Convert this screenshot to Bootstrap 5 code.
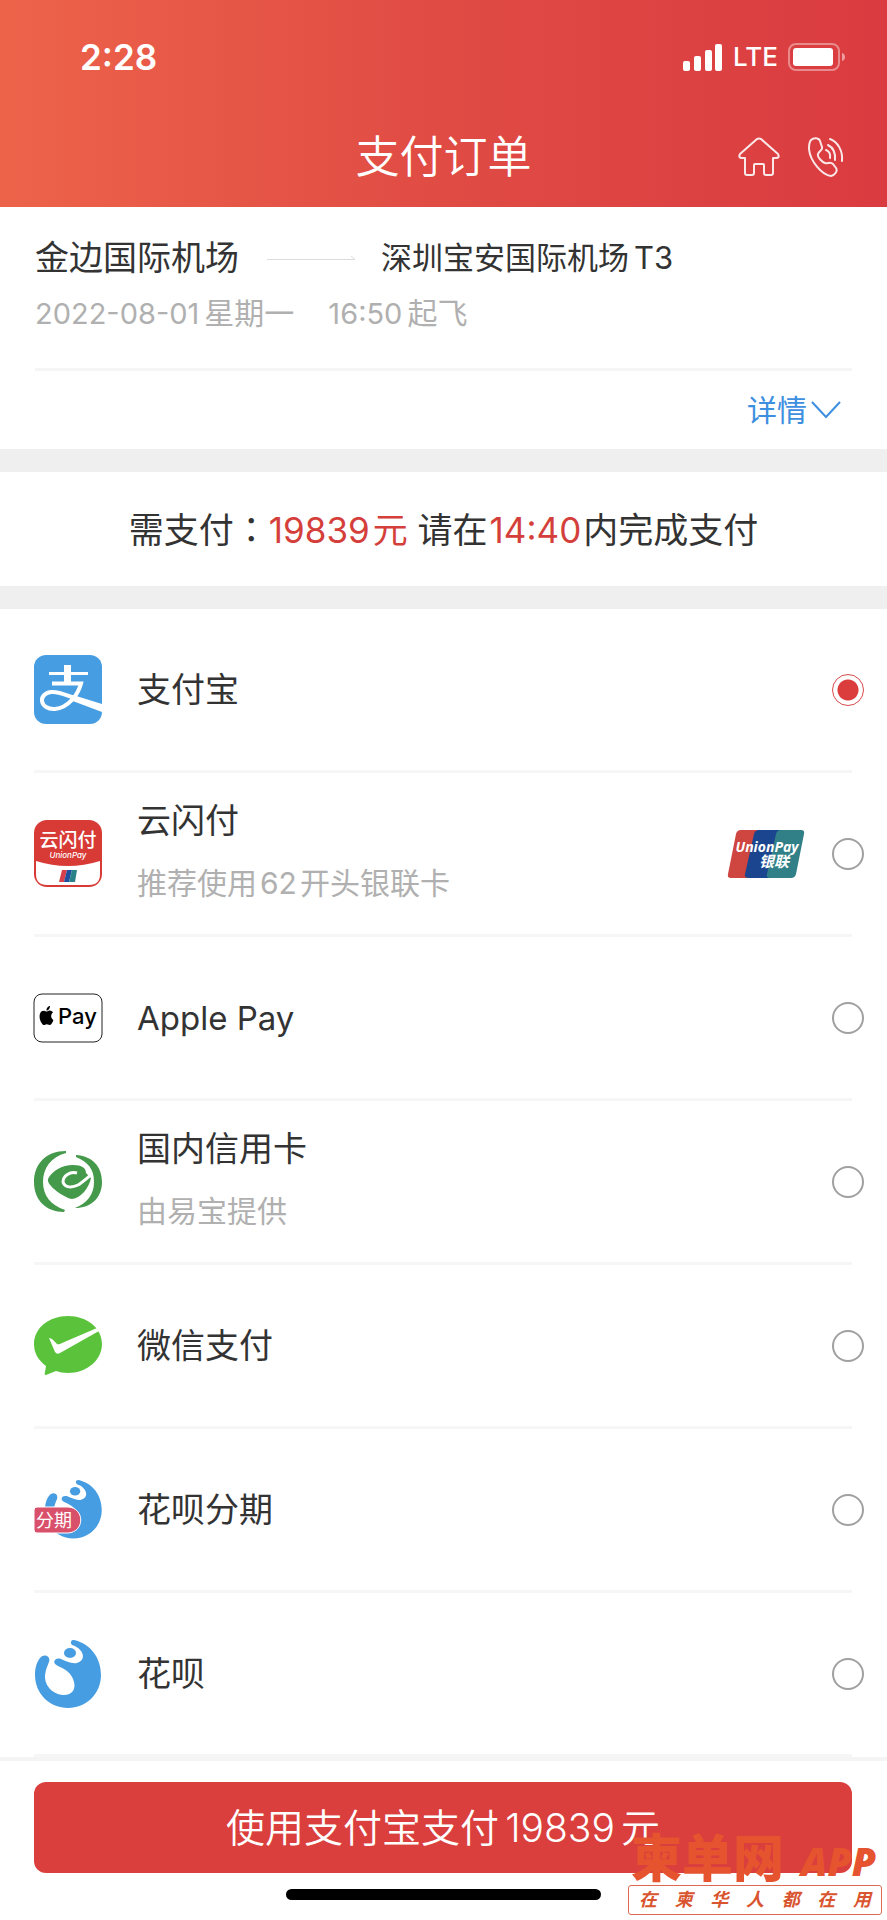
<!DOCTYPE html>
<html lang="zh-CN">
<head>
<meta charset="utf-8">
<meta name="viewport" content="width=device-width, initial-scale=1">
<title>支付订单</title>
<link href="https://cdn.jsdelivr.net/npm/bootstrap@5.3.0/dist/css/bootstrap.min.css" rel="stylesheet">
<style>
  body { font-family: Inter, "Noto Sans CJK SC", sans-serif; color: #333; background: #fff; }
  svg { display: block; flex: none; }
  .top-bar { background: linear-gradient(90deg, #ed634a 0%, #e04b44 50%, #da3b40 100%); color: #fff; }
  .status { padding: 33px 42px 0 80px; height: 84px; }
  .clock { font-size: 35px; line-height: 48px; font-weight: 600; }
  .lte { font-size: 26px; line-height: 48px; font-weight: 500; margin: 0 10px; }
  .title-row { display: grid; grid-template-columns: 1fr auto 1fr; align-items: center; height: 123px; padding: 22px 43px 0; }
  .title-row h1 { font-size: 44px; line-height: 60px; font-weight: 350; margin: 0; }
  .title-row a { color: #fff; }
  .trip { padding: 27px 35px 0 35px; }
  .from { font-size: 34px; line-height: 48px; }
  .route { margin: 0 24px 0 26px; }
  .to { font-size: 31px; line-height: 48px; }
  .num { margin: 0 3px; }
  .num-end { margin-left: 5px; }
  .num-start { margin-right: 5px; }
  .when { font-size: 30px; line-height: 40px; height: 40px; color: #b0b0b0; margin-top: 11px; }
  .when .num-start { font-size: 29px; }
  .takeoff { margin-left: 34px; }
  .more { border-top: 3px solid #f5f5f5; margin-top: 35px; height: 81px; }
  .more button { font-size: 30px; line-height: 40px; color: #3d8fe0; border: 0; background: none; padding: 0 11px 0 0; }
  .band { height: 23px; background: #efefef; }
  .due { font-size: 35px; line-height: 48px; height: 114px; padding-top: 32px; }
  .due .num-start { margin-right: 3px; }
  .due .num { margin: 0 2px; }
  .colon { font-family: "Noto Sans CJK TC", sans-serif; }
  .red { color: #d43f3b; }
  .methods { margin: 0 35px 0 34px; }
  .method { height: 164px; border-bottom: 3px solid #f6f6f6; cursor: pointer; }
  .logo-slot { width: 68px; margin-right: 35px; }
  .logo-slot svg { margin: 0 auto; overflow: visible; }
  .name { font-size: 34px; line-height: 48px; }
  .name-latin { font-size: 33px; }
  .two-line { padding-bottom: 6px; }
  .hint { font-size: 30px; line-height: 44px; margin-top: 16px; color: #b0b0b0; }
  .pick { appearance: none; width: 32px; height: 32px; margin: 0 -12px 0 27px; flex: none; border: 2px solid #a0a0a0; border-radius: 50%; background: #fff; }
  .pick:checked { border: 1px solid #d94a4a; background: radial-gradient(circle, #db3c3c 10px, #fff 11px); }
  .pay-bar { border-top: 4px solid #f4f4f4; padding: 21px 35px 18px 34px; }
  .pay-btn { height: 91px; border: 0; border-radius: 12px; background: #da3e3d; color: #fff; font-size: 39px; line-height: 56px; font-weight: 350; }
  .digits { margin: 0 6px; }
  .grabber { width: 315px; height: 11px; border-radius: 6px; background: #000; margin-top: 16px; }
  .stamp { position: absolute; right: 5px; bottom: 3px; width: 254px; color: #e5532f; pointer-events: none; }
  .stamp-top { font-size: 51px; line-height: 52px; font-weight: 900; white-space: nowrap; padding: 0 6px 0 3px; }
  .stamp-app { font-size: 39px; line-height: 48px; font-weight: 800; font-style: italic; font-family: "Open Sans", sans-serif; }
  .stamp-line { border: 1px solid #dd6a50; border-radius: 3px; background: #fff; font-size: 18px; line-height: 28px; font-weight: 700; font-style: italic; padding: 0 10px; color: #d9552f; }
</style>
</head>
<body>
<div class="position-relative">
  <header class="top-bar">
    <div class="status d-flex justify-content-between align-items-start">
      <div class="clock">2:28</div>
      <div class="d-flex align-items-center">
        <svg width="40" height="27" viewBox="0 0 40 27" fill="#fff"><rect y="17" width="7" height="10" rx="2"/><rect x="11" y="12" width="7" height="15" rx="2"/><rect x="22" y="6" width="7" height="21" rx="2"/><rect x="32" width="7" height="27" rx="2"/></svg>
        <span class="lte">LTE</span>
        <svg width="57" height="28" viewBox="0 0 57 28"><rect x="1" y="1" width="50" height="26" rx="7" fill="none" stroke="#fff" stroke-opacity=".4" stroke-width="2"/><rect x="5" y="5" width="40" height="18" rx="3" fill="#fff"/><path d="M54 10c4 1 4 7 0 8z" fill="#fff" fill-opacity=".5"/></svg>
      </div>
    </div>
    <div class="title-row">
      <span></span>
      <h1>支付订单</h1>
      <nav class="d-flex justify-content-end align-items-center" aria-label="快捷">
        <a href="#" aria-label="首页"><svg width="42" height="40" viewBox="0 0 42 40" fill="none" stroke="#fff" stroke-opacity=".88" stroke-width="2" stroke-linejoin="round"><path d="M19 2Q21 1 23 2L40 17Q42 21 38 21H35V36Q35 38 33 38H28Q26 38 26 36V28Q26 27 25 27H17Q16 27 16 28V36Q16 38 14 38H9Q7 38 7 36V21H4Q0 21 2 17Z"/></svg></a>
        <a href="#" class="ms-4 ps-1" aria-label="电话"><svg width="36" height="40" viewBox="0 0 36 40" fill="none" stroke="#fff" stroke-opacity=".88" stroke-width="2" stroke-linecap="round" stroke-linejoin="round"><path d="M3 3C6 0 11 1 12 4L14 10C15 13 11 14 10 17C9 20 14 25 17 26C20 27 22 24 25 27L28 31C30 34 27 38 23 39C14 38 2 24 1 12C1 8 1 5 3 3Z"/><path d="M18 13Q23 15 22 21M20 8Q28 12 27 23M22 2C30 5 35 14 34 24"/></svg></a>
      </nav>
    </div>
  </header>

  <main>
    <section class="trip">
      <div class="d-flex align-items-center">
        <span class="from">金边国际机场</span>
        <svg class="route" width="92" height="8" viewBox="0 0 92 8" fill="none" stroke="#dcdcdc" stroke-width="1"><path d="M2 5.500H90L86 2"/></svg>
        <span class="to">深圳宝安国际机场<span class="num-end">T3</span></span>
      </div>
      <div class="when"><span class="num-start">2022-08-01</span>星期一<span class="num-start takeoff">16:50</span>起飞</div>
      <div class="more d-flex justify-content-end align-items-center">
        <button type="button" class="d-flex align-items-center">详情<svg class="ms-1" width="30" height="18" viewBox="0 0 30 18" fill="none" stroke="#3d8fe0" stroke-width="2"><path d="M1 1L15 16L29 1"/></svg></button>
      </div>
    </section>
    <div class="band"></div>
    <p class="due text-center m-0">需支付<span class="colon" lang="zh-TW">：</span><span class="red"><span class="num-start">19839</span>元</span> 请在<span class="num red">14:40</span>内完成支付</p>
    <div class="band"></div>

    <form id="pay" class="methods">
      <label class="method d-flex align-items-center">
        <span class="logo-slot"><svg width="68" height="69" viewBox="0 0 68 69"><rect width="68" height="69" rx="12" fill="#479de1"/><g fill="none" stroke="#fff"><path d="M33.500 10V28" stroke-width="7"/><path d="M15 18.500H54" stroke-width="3"/><path d="M18 28.500H47C44 40 34 53 21 54C6 55 3 39 17 37C25 36 34 41 44 44" stroke-width="4"/></g><path d="M39 40L68 49V57L36 45Z" fill="#fff"/></svg></span>
        <span class="name flex-grow-1">支付宝</span>
        <input class="pick" type="radio" name="method" checked>
      </label>
      <label class="method d-flex align-items-center">
        <span class="logo-slot"><svg width="68" height="67" viewBox="0 0 68 67"><rect width="68" height="67" rx="13" fill="#d83a36"/><path d="M2 41Q34 51 66 41V54Q66 65 55 65H13Q2 65 2 54Z" fill="#fff"/><text x="34" y="27" text-anchor="middle" font-size="19" font-weight="500" fill="#fff">云闪付</text><text x="34" y="38" text-anchor="middle" font-size="8" font-style="italic" font-weight="500" fill="#fff">UnionPay</text><path d="M28 50H33L30 62H25Z" fill="#d8414b"/><path d="M33 50H38L35 62H30Z" fill="#1f4f9d"/><path d="M38 50H43L41 62H35Z" fill="#2a8289"/></svg></span>
        <span class="two-line flex-grow-1"><span class="name d-block">云闪付</span><span class="hint d-block">推荐使用<span class="num">62</span>开头银联卡</span></span>
        <svg width="78" height="48" viewBox="0 0 78 48"><path d="M14 0H32L24 48H4Q0 48 1 44L9 4Q10 0 14 0Z" fill="#cf453f"/><path d="M32 0H54L46 48H22Q17 48 18 44L27 4Q28 0 32 0Z" fill="#1c4590"/><path d="M54 0H74Q78 0 77 4L69 44Q68 48 64 48H43Q39 48 40 44L49 4Q50 0 54 0Z" fill="#318087"/><text x="40" y="22" text-anchor="middle" font-family="Open Sans, sans-serif" font-size="14" font-weight="700" font-style="italic" fill="#fff">UnionPay</text><text x="47" y="37" text-anchor="middle" font-size="15" font-weight="700" font-style="italic" fill="#fff">银联</text></svg>
        <input class="pick" type="radio" name="method">
      </label>
      <label class="method d-flex align-items-center">
        <span class="logo-slot"><svg width="68" height="49" viewBox="1 0 68 49"><rect x="1" y="1" width="68" height="48" rx="8" fill="#fff" stroke="#222" stroke-width="1"/><svg x="5" y="13" width="17" height="19" viewBox="0 0 16 16" preserveAspectRatio="none"><path d="M11.182.008C11.148-.03 9.923.023 8.857 1.180c-1.066 1.156-.902 2.482-.878 2.516s1.520.087 2.475-1.258.762-2.391.728-2.430m3.314 11.733c-.048-.096-2.325-1.234-2.113-3.422s1.675-2.789 1.698-2.854-.597-.790-1.254-1.157a3.700 3.700 0 0 0-1.563-.434c-.108-.003-.483-.095-1.254.116-.508.139-1.653.589-1.968.607-.316.018-1.256-.522-2.267-.665-.647-.125-1.333.131-1.824.328-.490.196-1.422.754-2.074 2.237-.652 1.482-.311 3.830-.067 4.560s.625 1.924 1.273 2.796c.576.984 1.340 1.667 1.659 1.899s1.219.386 1.843.067c.502-.308 1.408-.485 1.766-.472.357.013 1.061.154 1.782.539.571.197 1.111.115 1.652-.105.541-.221 1.324-1.059 2.238-2.758q.520-1.185.473-1.282"/></svg><text x="25" y="31" font-size="22" font-weight="500">Pay</text></svg></span>
        <span class="name name-latin flex-grow-1">Apple Pay</span>
        <input class="pick" type="radio" name="method">
      </label>
      <label class="method d-flex align-items-center">
        <span class="logo-slot"><svg width="68" height="62" viewBox="0 0 68 62" fill="#45994a"><path d="M32 0C12 0 0 13 0 31S12 61 30 61L31 59C17 54 9 45 9 31S17 6 32 2Z"/><path d="M42 4C58 5 68 15 68 31S57 57 41 57C53 52 60 44 60 31S54 11 42 6Z"/><path d="M14 28C18 20 28 14 39 14C48 14 52 17 52 22L57 27C55 37 47 47 38 48C33 48 12 35 14 28Z"/><path d="M43 22C36 20 29 25 29 31C31 37 38 37 44 34C49 31 52 28 58 23" fill="none" stroke="#fff" stroke-width="3"/></svg></span>
        <span class="two-line flex-grow-1"><span class="name d-block">国内信用卡</span><span class="hint d-block">由易宝提供</span></span>
        <input class="pick" type="radio" name="method">
      </label>
      <label class="method d-flex align-items-center">
        <span class="logo-slot"><svg width="68" height="59" viewBox="0 0 68 59"><path d="M34 0C53 0 68 12 68 28S53 57 34 57Q27 57 22 55L12 59Q10 59 11 56L12 50C4 44 0 37 0 28C0 12 15 0 34 0Z" fill="#5ac33b"/><path d="M15 22Q17 21 23 28Q25 29 28 27L63 12L65 15L26 37Q23 39 21 36Z" fill="#fff"/></svg></span>
        <span class="name flex-grow-1">微信支付</span>
        <input class="pick" type="radio" name="method">
      </label>
      <label class="method d-flex align-items-center">
        <span class="logo-slot"><svg width="68" height="59" viewBox="0 0 68 59"><g transform="translate(11 0) scale(.86)" fill="#479de1"><path id="swirl" d="M39 0C56 4 66 18 66 35C66 54 51 68 33 68S0 54 0 35C0 27 2 22 5 18C9 13 16 16 14 22C12 27 10 31 10 38C11 49 21 55 29 55C37 55 41 49 39 42C37 33 30 29 23 26C16 23 20 17 26 19C31 21 36 24 42 23C49 21 49 15 46 11C43 7 40 6 37 5C35 2 36 0 39 0Z"/><ellipse cx="35" cy="13" rx="6" ry="5"/></g><path d="M3 27H34C51 28 51 52 34 53H3Q0 53 0 50V30Q0 27 3 27Z" fill="#d9506b" stroke="#fff" stroke-width="1"/><text x="2" y="47" font-size="18" font-weight="400" fill="#fff">分期</text></svg></span>
        <span class="name flex-grow-1">花呗分期</span>
        <input class="pick" type="radio" name="method">
      </label>
      <label class="method d-flex align-items-center">
        <span class="logo-slot"><svg width="66" height="68" viewBox="0 0 66 68" fill="#479de1"><use href="#swirl"/><ellipse cx="35" cy="13" rx="6" ry="5"/></svg></span>
        <span class="name flex-grow-1">花呗</span>
        <input class="pick" type="radio" name="method">
      </label>
    </form>
  </main>

  <footer class="pay-bar">
    <button type="submit" form="pay" class="pay-btn w-100">使用支付宝支付<span class="digits">19839</span>元</button>
    <div class="grabber mx-auto"></div>
  </footer>

  <div class="stamp">
    <div class="stamp-top d-flex justify-content-between align-items-end"><span>柬单网</span><span class="stamp-app">APP</span></div>
    <div class="stamp-line d-flex justify-content-between"><span>在</span><span>柬</span><span>华</span><span>人</span><span>都</span><span>在</span><span>用</span></div>
  </div>
</div>
<script src="https://cdn.jsdelivr.net/npm/bootstrap@5.3.0/dist/js/bootstrap.bundle.min.js"></script>
</body>
</html>
